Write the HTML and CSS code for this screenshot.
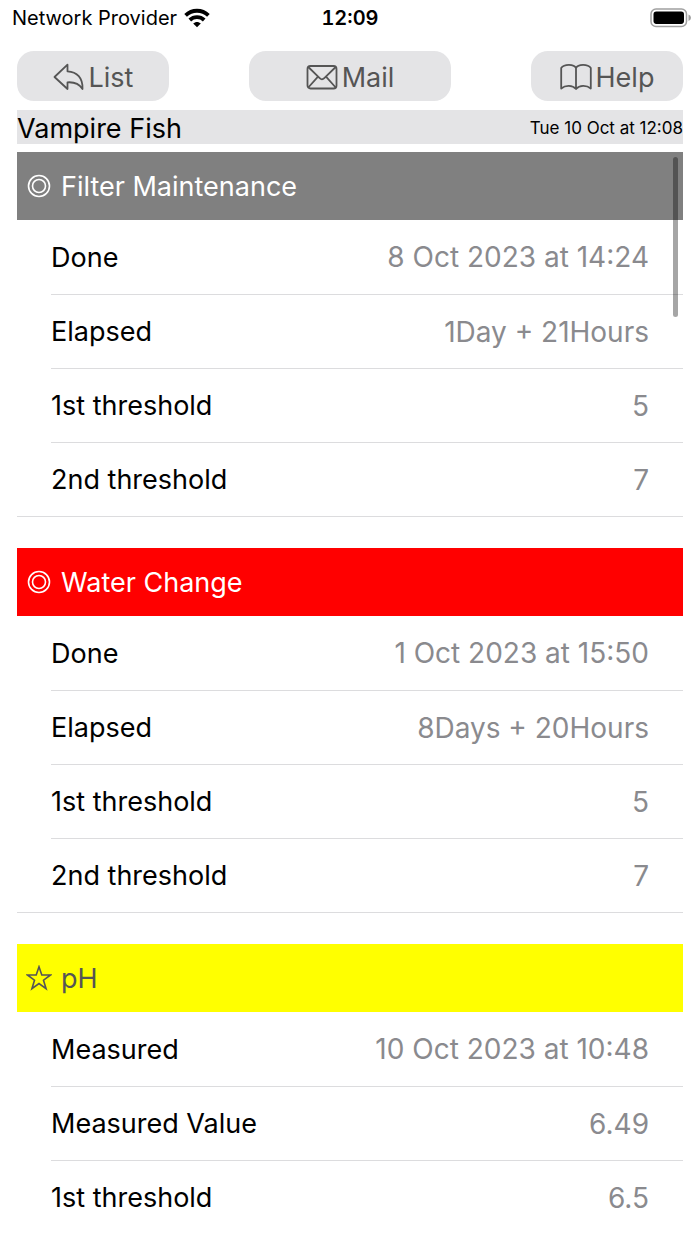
FILE: index.html
```html
<!DOCTYPE html>
<html lang="en">
<head>
<meta charset="utf-8">
<meta name="viewport" content="width=device-width, initial-scale=1">
<title>Vampire Fish</title>
<link rel="stylesheet" href="styles.css">
</head>
<body>
<div class="status">
  <div class="carrier">
    <span>Network Provider</span>
    <svg class="wifi" viewBox="0 0 26 20" aria-hidden="true">
      <g fill="none" stroke="#000" stroke-width="3.8">
        <path d="M1.600 7.400C8 1.200 18 1.200 24.400 7.400"/>
        <path d="M5.800 12C9.800 8.200 16.200 8.200 20.200 12"/>
      </g>
      <path d="M9.200 15.600C11.300 13.300 14.700 13.300 16.800 15.600L13 19.300Z"/>
    </svg>
  </div>
  <div class="clock">12:09</div>
  <div class="power">
    <svg class="battery" viewBox="0 0 42 20" aria-hidden="true">
      <rect x="1" y="1" width="35.500" height="17.500" rx="5" fill="none" stroke="#a0a0a0" stroke-width="1.500"/>
      <rect x="3.500" y="3.600" width="30.500" height="12.300" rx="2.800" fill="#000"/>
      <path d="M38.500 6.500Q41 7.500 41 9.800T38.500 13Z" fill="#a0a0a0"/>
    </svg>
  </div>
</div>
<nav class="toolbar">
  <button class="tool" type="button">
    <svg class="tool-icon" viewBox="0 0 32 28" aria-hidden="true"><path d="M14.500 1.700L1.500 14L14.500 26V19.300C21.500 18.800 26 20.500 29.500 26C30 15 24 8.800 14.500 8.300Z"/></svg>
    <span>List</span>
  </button>
  <button class="tool tool-wide" type="button">
    <svg class="tool-icon" viewBox="0 0 32 28" aria-hidden="true"><rect x="1.500" y="3" width="29" height="22.500" rx="3"/><path d="M2.300 4L13.700 15.200Q16 17.500 18.300 15.200L29.700 4M2.300 24.500L12 13.700M29.700 24.500L20 13.700"/></svg>
    <span>Mail</span>
  </button>
  <button class="tool" type="button">
    <svg class="tool-icon" viewBox="0 0 32 28" aria-hidden="true"><path d="M16 5C14 .8 4 .8 1.200 5V25.500C5.500 22 12.500 22 16 26C19.500 22 26.500 22 30.800 25.500V5C28 .8 18 .8 16 5ZM16 5V26"/></svg>
    <span>Help</span>
  </button>
</nav>
<header class="title">
  <h1 class="name">Vampire Fish</h1>
  <time class="stamp">Tue 10 Oct at 12:08</time>
</header>
<main class="list">
  <div class="thumb"></div>
  <section class="group">
    <h2 class="head head-gray">
      <svg class="mark" viewBox="0 0 26 26" aria-hidden="true"><circle cx="13" cy="13" r="10.500"/><circle cx="13" cy="13" r="6.500"/></svg>
      <span>Filter Maintenance</span>
    </h2>
    <dl class="rows">
      <div class="row"><dt>Done</dt><dd>8 Oct 2023 at 14:24</dd></div>
      <div class="row"><dt>Elapsed</dt><dd>1Day + 21Hours</dd></div>
      <div class="row"><dt>1st threshold</dt><dd>5</dd></div>
      <div class="row"><dt>2nd threshold</dt><dd>7</dd></div>
    </dl>
  </section>
  <section class="group">
    <h2 class="head head-red">
      <svg class="mark" viewBox="0 0 26 26" aria-hidden="true"><circle cx="13" cy="13" r="10.500"/><circle cx="13" cy="13" r="6.500"/></svg>
      <span>Water Change</span>
    </h2>
    <dl class="rows">
      <div class="row"><dt>Done</dt><dd>1 Oct 2023 at 15:50</dd></div>
      <div class="row"><dt>Elapsed</dt><dd>8Days + 20Hours</dd></div>
      <div class="row"><dt>1st threshold</dt><dd>5</dd></div>
      <div class="row"><dt>2nd threshold</dt><dd>7</dd></div>
    </dl>
  </section>
  <section class="group group-open">
    <h2 class="head head-yellow">
      <svg class="mark" viewBox="0 0 26 26" aria-hidden="true"><path d="M13 1.800L15.800 10H24.500L17.500 15.200L20.100 23.700L13 18.600L5.900 23.700L8.500 15.200L1.500 10H10.200Z"/></svg>
      <span>pH</span>
    </h2>
    <dl class="rows">
      <div class="row"><dt>Measured</dt><dd>10 Oct 2023 at 10:48</dd></div>
      <div class="row"><dt>Measured Value</dt><dd>6.49</dd></div>
      <div class="row"><dt>1st threshold</dt><dd>6.5</dd></div>
    </dl>
  </section>
</main>
</body>
</html>
```
FILE: styles.css
```css
* {
  box-sizing: border-box;
}

body {
  margin: 0;
  padding: 0 17px;
  background: #fff;
  color: #000;
  font-family: Inter, "Liberation Sans", sans-serif;
  font-size: 27px;
}

h1, h2, dl, dd {
  margin: 0;
  font-size: inherit;
  font-weight: 400;
}

.status {
  display: grid;
  grid-template-columns: 1fr auto 1fr;
  align-items: center;
  height: 35px;
  margin: 0 -9px;
  padding-left: 4px;
  padding-right: 4px;
  font-size: 20px;
}

.carrier {
  display: flex;
  align-items: center;
  gap: 7px;
}

.wifi {
  width: 26px;
  height: 20px;
}

.clock {
  font-weight: 600;
  font-variant-numeric: tabular-nums;
}

.power {
  display: flex;
  justify-content: flex-end;
  margin-right: -4px;
}

.battery {
  width: 42px;
  height: 20px;
}

.toolbar {
  display: flex;
  justify-content: space-between;
  padding: 16px 0 9px;
}

.tool {
  display: flex;
  align-items: center;
  justify-content: center;
  gap: 4px;
  width: 152px;
  height: 50px;
  padding: 2px 0 0;
  border: 0;
  border-radius: 17px;
  background: #e4e4e6;
  color: #555;
  font: inherit;
}

.tool-wide {
  width: 202px;
}

.tool-icon {
  width: 32px;
  height: 28px;
  fill: none;
  stroke: #555;
  stroke-width: 1.8;
  stroke-linejoin: round;
}

.title {
  display: flex;
  align-items: center;
  justify-content: space-between;
  height: 34px;
  margin-bottom: 8px;
  padding-top: 2px;
  background: #e4e4e6;
}

.stamp {
  font-size: 17px;
}

.list {
  position: relative;
}

.thumb {
  position: absolute;
  top: 5px;
  right: 5px;
  width: 5px;
  height: 160px;
  border-radius: 3px;
  background: rgba(0, 0, 0, 0.35);
}

.group {
  margin-bottom: 31px;
  border-bottom: 1px solid #dcdcde;
}

.group-open {
  margin-bottom: 0;
  border-bottom: 0;
}

.head {
  display: flex;
  align-items: center;
  gap: 9px;
  height: 68px;
  padding: 0 9px;
}

.mark {
  width: 26px;
  height: 26px;
  fill: none;
  stroke: currentColor;
  stroke-width: 1.6;
}

.head-gray {
  background: #808080;
  color: #fff;
}

.head-red {
  background: #f00;
  color: #fff;
}

.head-yellow {
  background: #ff0;
  color: #555;
}

.rows {
  padding-left: 34px;
}

.row {
  display: flex;
  align-items: center;
  justify-content: space-between;
  height: 74px;
  padding-right: 34px;
}

.row + .row {
  border-top: 1px solid #dcdcde;
}

.row dd {
  color: #8a8a8e;
  font-size: 28px;
}
```
